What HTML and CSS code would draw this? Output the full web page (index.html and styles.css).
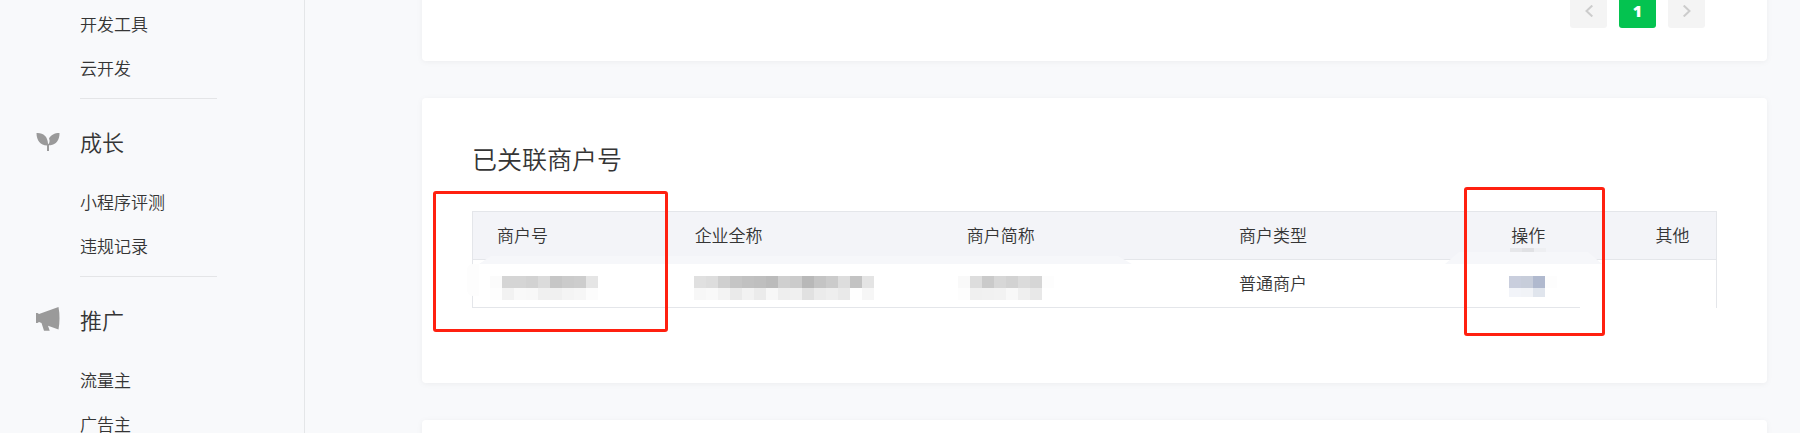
FILE: index.html
```html
<!DOCTYPE html>
<html lang="zh-CN">

<head>
	<meta charset="UTF-8">
	<meta name="viewport" content="width=device-width, initial-scale=1.0">
	<title>已关联商户号</title>
	<link rel="stylesheet" href="styles.css">
</head>

<body>
	<div class="page">
		<nav class="sidebar">
			<ul class="menu">
				<li><a href="#">开发工具</a></li>
				<li><a href="#">云开发</a></li>
			</ul>

			<h2 class="menu-title">
				<svg class="menu-icon" viewBox="0 0 24 24">
					<path d="M0.500 4C7 3.500 11.500 7 12 14.500C12.200 15.200 12.600 15.200 12.800 14.500C14 12.600 13.600 11 13 9.500C14.800 6 18.500 4 23.500 4C23.700 11 20 15.500 14.500 16.300H13V22H11V16.600C4.500 16.200 0.500 11.500 0.500 4Z" />
				</svg>
				成长
			</h2>
			<ul class="menu">
				<li><a href="#">小程序评测</a></li>
				<li><a href="#">违规记录</a></li>
			</ul>

			<h2 class="menu-title">
				<svg class="menu-icon" viewBox="0 0 24 24">
					<path d="M0 6H1.500L3 7L22.500 0Q24.500 11 22.500 22.500L12 18.700L13.700 23.700H8L5.500 16L3 15L1.500 16H0Z" />
				</svg>
				推广
			</h2>
			<ul class="menu">
				<li><a href="#">流量主</a></li>
				<li><a href="#">广告主</a></li>
			</ul>
		</nav>

		<main class="content">
			<section class="card card-pager">
				<button class="pager-btn" type="button" aria-label="上一页">
					<svg viewBox="0 0 8 12"><path d="M7.300 0.500L1.500 6L7.300 11.500" /></svg>
				</button>
				<button class="pager-btn pager-current" type="button">1</button>
				<button class="pager-btn" type="button" aria-label="下一页">
					<svg viewBox="0 0 8 12"><path d="M0.700 0.500L6.500 6L0.700 11.500" /></svg>
				</button>
			</section>

			<section class="card">
				<h1>已关联商户号</h1>
				<div class="table-wrap">
					<table>
						<colgroup>
							<col class="col-id">
							<col class="col-name">
							<col class="col-name">
							<col class="col-name">
							<col class="col-action">
							<col>
						</colgroup>
						<thead>
							<tr>
								<th>商户号</th>
								<th>企业全称</th>
								<th>商户简称</th>
								<th>商户类型</th>
								<th>操作</th>
								<th>其他</th>
							</tr>
						</thead>
						<tbody>
							<tr>
								<td class="masked"><svg data-mask="id"></svg></td>
								<td class="masked"><svg data-mask="company"></svg></td>
								<td class="masked"><svg data-mask="short"></svg></td>
								<td>普通商户</td>
								<td class="masked"><svg data-mask="action"></svg></td>
								<td></td>
							</tr>
						</tbody>
					</table>
					<!-- faixas que cobrem os dados -->
					<div class="smear smear-left"></div>
					<div class="smear smear-edge"></div>
					<div class="smear smear-right"></div>
					<div class="smear smear-text"></div>
					<div class="smear smear-bottom"></div>
					<div class="mark mark-id"></div>
					<div class="mark mark-action"></div>
				</div>
			</section>

			<section class="card card-next"></section>
		</main>
	</div>

	<script>
		// x inicial e cores de cada linha de blocos
		const mascaras = {
			id: {
				x: 17,
				linhas: ['fbfbfb d5d5d5 d5d5d5 d2d2d2 dbdbdb c6c6c6 cbcbcb cdcdcd e5e5e5', 'fdfdfd f2f2f2 f9f9f9 f8f8f8 f0f0f0 f0f0f0 f4f4f4 f6f6f6 fcfcfc']
			},
			company: {
				x: 23,
				linhas: ['e0e0e0 dddddd cfcfcf c5c5c5 c1c1c1 bfbfbf bbbbbb cfcfcf cbcbcb b8b8b8 c4c4c4 cbcbcb dddddd c3c3c3 e4e4e4', 'f7f7f7 f9f9f9 f3f3f3 eaeaea f2f2f2 ebebeb f7f7f7 eeeeee f0f0f0 e1e1e1 ebebeb eeeeee e9e9e9 fefefe f6f6f6']
			},
			short: {
				x: 15,
				linhas: ['f9f9f9 dddddd cacaca d7d7d7 d2d2d2 dbdbdb d6d6d6 fdfdfd', 'fdfdfd f0f0f0 f1f1f1 f2f2f2 f8f8f8 efefef e8e8e8']
			},
			action: {
				x: 22,
				linhas: ['c9cedd c7cdda b0b9ce fdfdfd', 'f2f4f9 f1f3f7 e0e5ed']
			}
		};

		document.querySelectorAll('[data-mask]').forEach(svg => {
			const mascara = mascaras[svg.dataset.mask];
			mascara.linhas.forEach((linha, i) => {
				linha.split(' ').forEach((cor, j) => {
					const bloco = document.createElementNS('http://www.w3.org/2000/svg', 'rect');
					bloco.setAttribute('x', mascara.x + j * 12);
					bloco.setAttribute('y', 16 + i * 12);
					bloco.setAttribute('width', 12);
					bloco.setAttribute('height', svg.dataset.mask === 'action' && i === 1 ? 9 : 12);
					bloco.setAttribute('fill', '#' + cor);
					svg.appendChild(bloco);
				});
			});
		});
	</script>
</body>

</html>
```
FILE: styles.css
```css
* {
	box-sizing: border-box;
}

body {
	margin: 0;
	background: #f8f9fb;
	color: #353535;
	font-family: "Noto Sans CJK SC", sans-serif;
	font-size: 17px;
	font-weight: 350;
}

.page {
	display: flex;
	height: 100vh;
	overflow: hidden;
}

/* menu lateral */
.sidebar {
	flex: 0 0 305px;
	padding: 2px 0 0 36px;
	border-right: 1px solid #e4e6e8;
}

.menu {
	list-style: none;
	width: 137px;
	margin: 0 0 0 44px;
	padding: 0 0 8px;
	border-bottom: 1px solid #e4e5e7;
}

.menu a {
	display: block;
	line-height: 44px;
	color: #353535;
	text-decoration: none;
}

.menu-title {
	display: flex;
	align-items: center;
	gap: 20px;
	margin: 27px 0 24px;
	font-size: 22px;
	line-height: 30px;
	font-weight: 350;
}

.menu-icon {
	width: 24px;
	height: 24px;
	fill: #9a9a9a;
}

/* conteudo */
.content {
	flex: 1;
	display: flex;
	flex-direction: column;
	gap: 37px;
	margin-top: -9px;
	padding: 0 33px 0 117px;
}

.card {
	flex: none;
	padding: 40px 50px 75px;
	background: #fff;
	border-radius: 4px;
	box-shadow: 0 1px 6px rgba(0, 0, 0, 0.05);
}

.card-pager {
	display: flex;
	justify-content: flex-end;
	gap: 12px;
	padding: 0 62px 33px;
}

.card-next {
	min-height: 200px;
}

.pager-btn {
	display: flex;
	align-items: center;
	justify-content: center;
	width: 37px;
	height: 37px;
	padding: 2px 0 0;
	border: 0;
	border-radius: 3px;
	background: #f4f4f4;
}

.pager-btn svg {
	width: 8px;
	height: 12px;
	fill: none;
	stroke: #ccc;
	stroke-width: 2;
}

.pager-current {
	background: #04c350;
	color: #fff;
	font-family: "Open Sans", sans-serif;
	font-size: 16px;
	line-height: 20px;
	font-weight: 800;
}

h1 {
	margin: 0 0 33px;
	font-size: 25px;
	line-height: 40px;
	font-weight: 350;
}

.table-wrap {
	position: relative;
}

table {
	width: 100%;
	table-layout: fixed;
	border: 1px solid #e4e6ea;
	border-collapse: separate;
	border-spacing: 0;
}

.col-id {
	width: 15.9%;
}

.col-name {
	width: 21.9%;
}

.col-action {
	width: 11.6%;
}

th,
td {
	height: 47px;
	padding: 0 0 2px 24px;
	font-weight: 350;
	text-align: left;
}

th {
	height: 48px;
	background: #f3f4f8;
	border-bottom: 1px solid #e4e6ea;
}

td.masked {
	padding: 0;
}

.masked svg {
	position: relative;
	z-index: 1;
	display: block;
	width: 100%;
	height: 47px;
	shape-rendering: crispEdges;
}

/* faixas por cima da tabela */
.smear {
	position: absolute;
}

.smear-left {
	top: 45px;
	left: 7px;
	right: 47%;
	height: 8px;
	background: #f6f7fa;
	clip-path: polygon(12px 0, calc(100% - 14px) 0, 100% 100%, 0 100%);
}

.smear-edge {
	top: 53px;
	left: -5px;
	width: 12px;
	height: 32px;
	background: #fdfdfd;
	border-radius: 6px 0 0 6px;
}

.smear-right {
	top: 41px;
	right: 115px;
	width: 157px;
	height: 12px;
	background: #f6f7fa;
	clip-path: polygon(14px 0, calc(100% - 14px) 0, 100% 100%, 0 100%);
}

.smear-text {
	top: 37px;
	right: 171px;
	width: 36px;
	height: 4px;
	background: linear-gradient(90deg, #e6e7ea 12px, #e0e1e4 12px 24px, #eeeff2 24px);
}

.smear-bottom {
	right: 1px;
	bottom: 0;
	width: 136px;
	height: 1px;
	background: #fff;
}

/* destaques vermelhos */
.mark {
	position: absolute;
	border: 3px solid #ff2010;
	border-radius: 3px;
	z-index: 2;
}

.mark-id {
	top: -20px;
	left: -39px;
	width: 235px;
	height: 141px;
}

.mark-action {
	top: -24px;
	right: 112px;
	width: 141px;
	height: 149px;
}
```
